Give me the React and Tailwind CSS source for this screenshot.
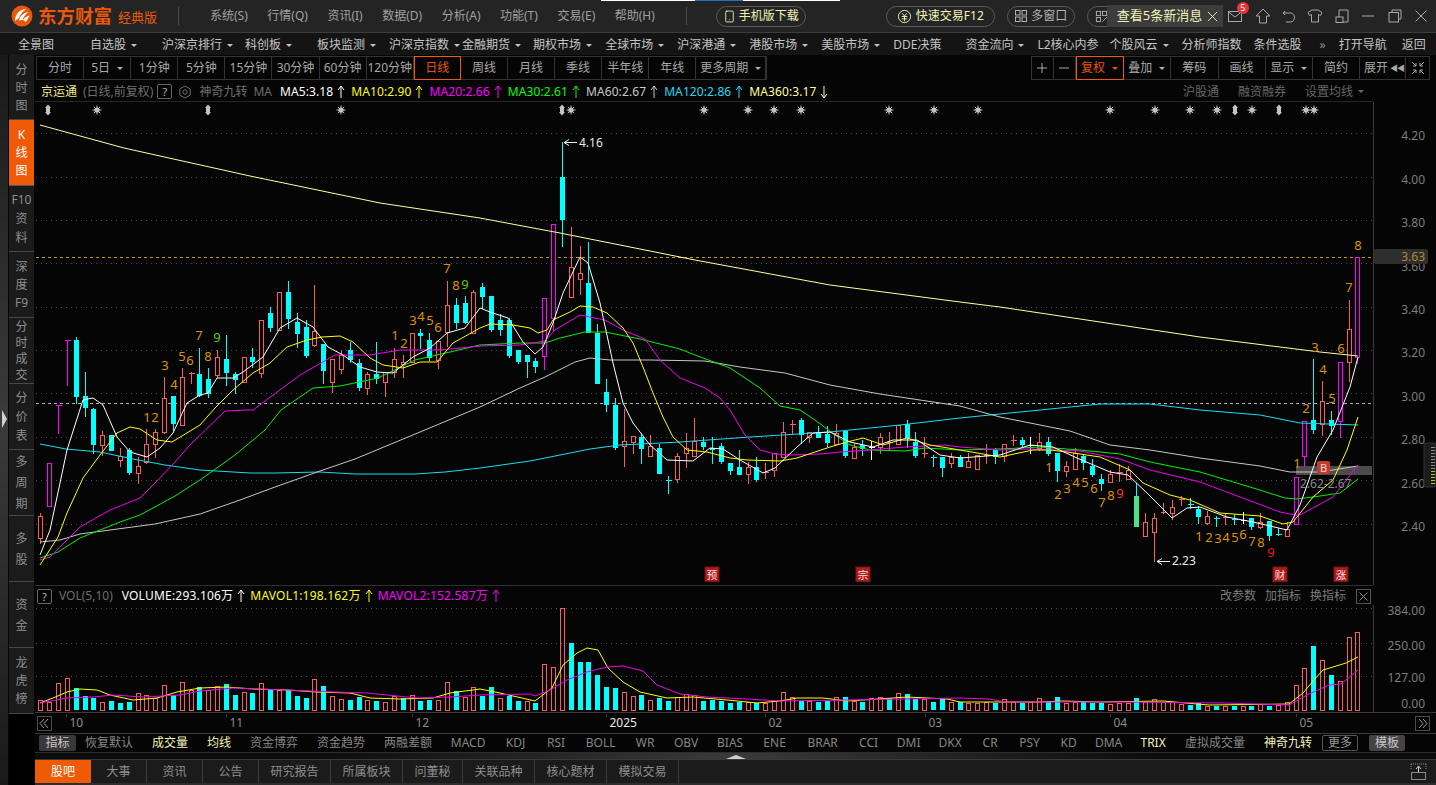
import React from "react";
import { Smartphone } from "lucide-react";

const BG = "#050505";
const RED = "#f95d5d";
const CY = "#00ffff";
const MG = "#ff00ff";

const CANDLES = [
["r",516,538,513,543],["m",463,506],["m",405,405,405,433],["m",340,340,340,385],["c",340,396,337,403],["c",396,407,372,416],["c",409,444,408,453],["r",435,445,431,455],["c",435,450],["r",456,460,448,466],
["c",450,472,448,474],["r",466,473,457,483],["r",444,462,429,463],["r",432,444,429,457],["r",398,432,377,433],["c",396,423,396,430],["r",377,425,368,425],["r",373,373,372,383],["c",374,395,348,396],["c",379,393,368,397],
["r",357,375,350,377],["c",359,372,335,385],["c",374,379,372,393],["r",357,382],["c",357,361,348,367],["r",320,373,320,377],["c",313,327,307,331],["r",292,330],["c",292,318,281,328],["c",322,333,313,347],
["c",327,355,320,357],["r",331,345,285,346],["c",344,370,344,383],["r",359,382,359,392],["r",355,369,350,373],["c",350,359,342,362],["c",363,387,359,390],["r",374,388,372,394],["c",374,378,342,383],["r",372,382,372,396],
["r",359,372,348,377],["r",362,364,355,377],["r",333,362],["c",333,335,329,348],["c",340,357,333,360],["r",341,360,341,368],["r",305,332,281,346],["c",305,322,298,328],["c",303,322,296,323],["r",292,333,290,333],
["c",287,296,283,308],["c",296,329,296,331],["c",320,329,314,335],["c",320,355,318,357],["c",350,361,350,363],["c",355,361,355,377],["c",361,366,358,372],["m",298,356,298,369],["m",224,318,224,330],["c",177,219,142,246],
["r",267,297,227,297],["r",273,279,246,294],["c",283,332,242,332],["c",333,383,324,383],["c",392,404,379,411],["c",405,447,398,449],["r",441,446,409,466],["r",436,442,436,453],["c",437,448,433,463],["r",446,456,435,456],
["c",448,473,444,473],["c",480,480,476,493],["r",456,479,453,482],["r",448,453,433,467],["r",441,456,418,456],["c",442,446,437,449],["c",448,449,437,463],["c",446,461,443,463],["c",463,470,463,474],["c",467,474,450,474],
["r",467,474,462,483],["c",467,479,457,481],["r",472,472,463,478],["r",453,470,453,476],["r",432,457,422,457],["r",424,424,420,434],["c",420,434,418,443],["r",432,437,432,442],["c",433,437,426,437],["c",434,442,426,446],
["r",433,444,424,444],["c",431,455,431,457],["r",447,458,443,458],["c",445,448,440,455],["w",447,447,441,459],["r",437,447,433,453],["r",442,442,432,450],["r",425,444],["c",424,437,420,447],["c",442,455,432,457],
["r",453,453,437,457],["c",457,457,455,466],["c",457,467,457,476],["r",457,463,453,467],["c",457,466,455,466],["r",461,467,453,467],["r",455,469,455,469],["r",455,455,444,463],["c",450,456,448,463],["r",444,456,444,461],
["r",440,440,435,445],["c",440,444,437,447],["w",445,445,437,453],["r",442,448,433,450],["c",442,453,437,455],["c",453,470,453,481],["r",466,471,461,476],["r",453,469,448,469],["c",456,462,454,469],["c",466,474,459,476],
["c",479,483,474,490],["r",474,482,470,482],["r",472,472,464,481],["r",470,479,466,479],["g",496,526,483,526],["r",522,536,513,536],["r",518,532,513,561],["r",512,512,503,513],["r",507,513,500,519],["r",499,499,496,505],
["c",504,504,498,508],["c",509,516,506,523],["r",516,523,511,524],["c",518,518,516,526],["r",517,517,514,524],["c",519,519,514,524],["w",520,520,512,523],["c",518,526,518,529],["r",522,527,513,528],["c",521,535,521,540],
["c",534,534,528,535],["r",529,536,522,536],["m",477,524],["m",421,456,421,466],["c",420,429,359,433],["r",401,424,381,435],["c",420,425,411,434],["m",362,421,362,437],["r",329,362,300,381],["m",257,357,257,363],
];

const VOLS = "r700 r702 r683 r678 c688 c696 c698 r702 c701 c703 c702 r693 r695 r698 r685 c695 r682 r690 c687 r690 r686 c684 c695 r692 c693 r683 c690 r690 c690 c696 c698 r679 c686 r696 r699 c700 c697 r700 c701 r702 r696 c698 r695 c701 c700 r700 r682 c691 r697 r687 c696 c687 r698 c696 c701 r701 c703 r664 r667 r608 c643 c662 c662 c675 c687 c688 r692 r696 c695 r700 c698 c701 r697 r694 r695 c701 c700 c701 c703 c702 r702 c703 r703 r701 r692 r697 c701 r701 c702 c701 r697 c697 r701 c702 r698 r697 c698 r693 c694 c699 r699 c702 c699 r702 c702 r703 r703 r702 c703 r699 r702 c703 r702 r698 c702 c697 r703 r702 c702 c703 c703 r704 r703 r703 c698 r702 r699 r702 r702 r704 c705 c703 r706 c706 r706 c706 r706 c706 r704 c706 r705 r702 r685 r668 c646 r660 c675 r681 r637 r632".split(" ");

const MA360 = "40,125 124,148 250,176 380,203 480,218 560,233 695,260 830,285 960,302 1000,307 1100,322 1200,337 1320,352 1358,356";
const MA120 = "40,444 66,449 100,452 133,459 165,465 200,470 250,473 275,473 320,472 355,474 415,474 445,472 480,468 530,461 590,449 620,445 680,442 750,437 830,432 900,425 960,418 1000,414 1040,410 1100,404 1150,404 1200,410 1260,415 1300,423 1358,425";
const MA60 = "40,542 60,540 80,534 110,530 155,524 200,514 240,500 275,487 320,471 355,459 420,432 480,407 520,388 545,377 575,362 590,358 610,360 650,360 705,361 740,367 785,373 830,385 880,394 920,400 960,406 1000,417 1070,431 1110,445 1150,450 1200,458 1260,466 1290,472 1320,472 1358,466";
const MA30 = "40,558 58,552 80,538 100,530 120,522 140,515 175,496 200,480 235,455 265,430 281,410 313,388 340,386 378,378 415,360 450,352 480,345 520,343 545,343 560,338 585,332 605,332 640,339 680,349 695,355 730,368 760,388 780,406 800,410 815,420 835,435 850,445 870,450 905,451 925,448 960,450 1000,449 1040,447 1080,450 1120,454 1150,462 1200,472 1250,487 1285,498 1297,499 1320,496 1340,493 1358,479";
const MA20 = "40,560 50,557 80,527 110,510 140,498 155,483 175,462 190,445 225,411 245,410 253,410 300,375 335,355 370,355 400,350 440,350 480,346 520,345 545,341 555,330 580,315 605,320 625,331 645,339 660,360 680,378 705,388 720,398 730,410 745,435 760,450 775,454 790,455 820,454 840,452 870,450 905,447 945,445 960,447 1000,450 1030,449 1080,451 1120,459 1150,470 1200,482 1240,497 1280,512 1295,515 1300,515 1333,497 1358,465";
const MA10 = "40,565 58,537 67,513 83,478 100,455 117,433 130,427 140,429 157,440 172,442 200,425 215,408 233,390 253,373 270,363 287,347 307,340 322,337 340,336 353,342 370,358 383,365 403,368 420,362 437,362 453,343 480,328 490,324 513,325 530,328 538,333 547,330 553,320 570,312 580,306 593,307 607,313 623,328 633,343 643,367 653,393 663,417 673,437 687,450 707,452 730,458 747,460 780,461 797,458 830,447 847,442 863,438 883,445 907,438 930,445 960,450 1000,457 1033,450 1050,450 1067,452 1100,457 1130,470 1143,483 1170,495 1190,500 1220,513 1260,516 1283,524 1293,522 1313,497 1333,480 1347,450 1358,417";
const MA5 = "40,555 50,530 67,450 83,400 93,398 103,405 117,437 130,452 147,457 160,448 173,433 187,403 200,395 208,393 217,378 233,378 243,372 263,357 280,328 297,318 313,327 328,347 343,355 360,367 377,372 393,373 413,357 430,348 447,333 465,328 480,308 490,312 508,318 523,342 535,354 543,347 553,323 563,293 580,257 588,263 600,303 613,363 623,403 633,423 650,445 667,460 693,461 710,448 723,449 740,460 763,473 775,468 797,447 813,433 830,432 850,442 873,447 893,440 917,440 940,455 960,458 1000,455 1030,445 1053,447 1077,458 1110,472 1128,475 1147,493 1172,518 1187,508 1200,507 1227,517 1253,522 1287,530 1300,505 1317,457 1333,430 1350,387 1358,357";
const MAV1 = "40,703 53,698 67,692 80,689 97,690 110,695 133,700 157,698 177,692 200,688 227,687 253,689 287,690 317,692 350,693 370,698 400,699 433,698 450,693 480,689 500,693 513,696 535,701 552,688 563,665 577,653 587,648 598,650 608,668 623,682 640,692 667,698 693,697 727,700 757,703 780,701 797,698 823,698 847,701 893,698 907,697 947,699 960,702 999,702 1039,702 1063,701 1099,702 1163,701 1209,705 1289,704 1303,693 1314,680 1323,670 1333,667 1346,663 1358,657";
const MAV2 = "40,703 67,698 93,697 113,695 143,697 180,695 200,691 233,688 287,690 333,692 367,693 417,698 450,697 480,695 530,694 535,696 550,690 567,680 587,672 607,667 623,666 643,671 657,685 680,694 707,697 747,699 780,701 847,700 960,698 989,699 1006,702 1123,702 1223,703 1289,705 1309,694 1329,685 1341,684 1358,670";

const NUMS = [
["1",147,417],["2",155,417],["3",165,365],["4",174,384],["5",182,356],["6",190,360],["7",199,335],["8",208,356],["9",217,337,"#5cd000"],
["1",395,335],["2",404,343],["3",413,320],["4",421,316],["5",430,320],["6",438,327],["7",447,268],["8",456,285],["9",465,284,"#5cd000"],
["1",1049,467],["2",1058,494],["3",1067,488],["4",1076,482],["5",1085,482],["6",1094,488],["7",1102,502],["8",1111,495],["9",1120,493,"#f04010"],
["1",1199,536],["2",1209,537],["3",1218,538],["4",1226,537],["5",1235,537],["6",1243,534],["7",1252,541],["8",1261,542],["9",1271,552,"#f01010"],
["1",1297,463],["2",1306,408],["3",1315,347],["4",1323,369],["5",1332,398],["6",1341,348],["7",1349,287],["8",1358,245],
];
const STARS = [97,341,571,704,748,774,801,889,934,978,1110,1155,1190,1217,1252,1306,1314];
const MARKS = [48,208,562,1235,1279];
const GRID = [133.5,177,220.5,263.5,307,350.5,393.5,437,480.5,524];
const PRICE = [["4.20",135],["4.00",179],["3.80",222],["3.60",266],["3.40",309],["3.20",352],["3.00",396],["2.80",439],["2.60",483],["2.40",526]];

const cx = (i) => Math.round(40.3 + 8.84 * i) + 0.5;

function Candle({ d, i }) {
  const [k, t, b, hi, lo] = d;
  const x = cx(i);
  const col = k === "r" ? RED : k === "c" ? CY : k === "m" ? MG : k === "w" ? "#ffffff" : "#4fe08a";
  const h = hi || t;
  const l = lo || b;
  const wick = k === "g" ? CY : col;
  return (
    <g shapeRendering="crispEdges">
      <line x1={x} x2={x} y1={h} y2={l + 1} stroke={wick} />
      {t === b ? (
        <line x1={x - 3} x2={x + 3} y1={t + 0.5} y2={t + 0.5} stroke={col} />
      ) : k === "r" || k === "m" ? (
        <rect x={x - 2} y={t + 0.5} width={4} height={b - t} fill={BG} stroke={col} />
      ) : (
        <rect x={x - 2.5} y={t} width={5} height={b - t + 1} fill={col} />
      )}
    </g>
  );
}

function Star({ x }) {
  return (
    <g stroke="#bdbdbd" strokeWidth="1">
      <circle cx={x} cy={110} r={2.6} fill="#cfcfcf" stroke="none" />
      <line x1={x - 4.5} x2={x + 4.5} y1={110} y2={110} />
      <line x1={x} x2={x} y1={105.5} y2={114.5} />
      <line x1={x - 3.2} x2={x + 3.2} y1={106.8} y2={113.2} />
      <line x1={x - 3.2} x2={x + 3.2} y1={113.2} y2={106.8} />
    </g>
  );
}

function Mark({ x }) {
  return <path d={`M${x} 104.5 l3 3.5 h-1 v4 h1 l-3 3.5 l-3 -3.5 h1 v-4 h-1 z`} fill="#c4c4c4" />;
}

function PriceChart() {
  return (
    <svg viewBox="35 102 1401 483" width="1401" height="483" className="block">
      <g stroke="#4a4a4a" strokeDasharray="1 4" shapeRendering="crispEdges">
        {GRID.map((y) => (
          <line key={y} x1="36" x2="1373" y1={y} y2={y} />
        ))}
      </g>
      <line x1="36" x2="1373" y1="257.5" y2="257.5" stroke="#c49620" strokeDasharray="3 3" shapeRendering="crispEdges" />
      <line x1="36" x2="1373" y1="403.5" y2="403.5" stroke="#b0b0b0" strokeDasharray="3 3" shapeRendering="crispEdges" />
      {STARS.map((x) => (
        <Star key={x} x={x} />
      ))}
      {MARKS.map((x) => (
        <Mark key={x} x={x} />
      ))}
      <rect x="1296" y="466" width="76" height="9" fill="#4c4c4c" />
      {CANDLES.map((d, i) => (
        <Candle key={i} d={d} i={i} />
      ))}
      <g fill="none" strokeWidth="1">
        <polyline points={MA360} stroke="#ffff9e" />
        <polyline points={MA120} stroke="#19dcf0" />
        <polyline points={MA60} stroke="#c6c6c6" />
        <polyline points={MA30} stroke="#00f000" />
        <polyline points={MA20} stroke="#f000f0" />
        <polyline points={MA10} stroke="#ffff00" />
        <polyline points={MA5} stroke="#ffffff" />
      </g>
      <g fontSize="13" textAnchor="middle" fill="#dc9200">
        {NUMS.map(([t, x, y, c], i) => (
          <text key={i} x={x} y={y + 5} fill={c || "#dc9200"}>
            {t}
          </text>
        ))}
      </g>
      <g stroke="#f0f0f0" fill="none">
        <path d="M564 142.5 H577 M564 142.5 l5 -3 M564 142.5 l5 3" />
        <path d="M1157 561.5 H1170 M1157 561.5 l5 -3 M1157 561.5 l5 3" />
      </g>
      <text x="579" y="146.5" fontSize="12" fill="#e8e8e8">4.16</text>
      <text x="1172" y="565" fontSize="12" fill="#e8e8e8">2.23</text>
      <text x="1300" y="487.5" fontSize="12" fill="#8a8a8a">2.62-2.67</text>
      <rect x="1317" y="461" width="13" height="13" rx="2" fill="#c8382c" />
      <text x="1323.5" y="471.5" fontSize="11" textAnchor="middle" fill="#f0d8d0">B</text>
      {[["预", 712], ["宗", 863], ["财", 1280], ["涨", 1341]].map(([t, x]) => (
        <g key={t}>
          <rect x={x - 7} y="567" width="14" height="14.5" fill="#b01c1c" stroke="#7a1414" />
          <text x={x} y="578.5" fontSize="10.5" textAnchor="middle" fill="#f2e0e0">{t}</text>
        </g>
      ))}
      <line x1="1373.5" x2="1373.5" y1="102" y2="585" stroke="#3a3a3a" shapeRendering="crispEdges" />
      <g fontSize="12" fill="#7c7c7c" textAnchor="end">
        {PRICE.map(([t, y]) => (
          <text key={t} x="1425" y={y + 4.5}>{t}</text>
        ))}
      </g>
      <rect x="1374" y="249" width="54" height="15" rx="2" fill="#2e2e2e" />
      <text x="1425" y="261" fontSize="12" fill="#b08a2c" textAnchor="end">3.63</text>
      <rect x="1424" y="443" width="12" height="44" rx="2" fill="#1c1c1c" stroke="#333" />
      <g stroke="#8a8a8a" shapeRendering="crispEdges">
        {[447, 450, 453, 456, 459, 462, 465, 468].map((y) => (
          <line key={y} x1="1431" x2="1435" y1={y + 0.5} y2={y + 0.5} />
        ))}
      </g>
      <g stroke="#b8c020" shapeRendering="crispEdges">
        {[471, 474, 477, 480, 483].map((y) => (
          <line key={y} x1="1431" x2="1435" y1={y + 0.5} y2={y + 0.5} />
        ))}
      </g>
    </svg>
  );
}

function VolChart() {
  return (
    <svg viewBox="35 605 1401 107" width="1401" height="107" className="block overflow-visible">
      <g stroke="#4a4a4a" strokeDasharray="1 4" shapeRendering="crispEdges">
        {[608.5, 643.5, 676.5].map((y) => (
          <line key={y} x1="36" x2="1373" y1={y} y2={y} />
        ))}
      </g>
      <g shapeRendering="crispEdges">
        {VOLS.map((v, i) => {
          const top = +v.slice(1);
          const x = cx(i);
          return v[0] === "c" ? (
            <rect key={i} x={x - 2.5} y={top} width={5} height={710 - top} fill={CY} />
          ) : (
            <rect key={i} x={x - 2} y={top + 0.5} width={4} height={709.5 - top} fill="none" stroke={RED} />
          );
        })}
      </g>
      <polyline points={MAV1} fill="none" stroke="#ffff00" />
      <polyline points={MAV2} fill="none" stroke="#f000f0" />
      <line x1="1373.5" x2="1373.5" y1="605" y2="712" stroke="#3a3a3a" shapeRendering="crispEdges" />
      <g fontSize="12" fill="#7c7c7c" textAnchor="end">
        {[["384.00", 615], ["250.00", 650], ["127.00", 682], ["0.00", 708]].map(([t, y]) => (
          <text key={t} x="1425" y={y}>{t}</text>
        ))}
      </g>
    </svg>
  );
}

const TopIcon = ({ children, cls }) => (
  <svg viewBox="0 0 16 16" width="16" height="16" fill="none" stroke="#a8a8a8" className={cls}>
    {children}
  </svg>
);

function Caret({ c = "#b0b0b0", cls = "ml-[5px]" }) {
  return <span className={cls + " inline-block w-0 h-0 border-x-[3px] border-x-transparent border-t-[3px]"} style={{ borderTopColor: c }} />;
}

function Logo() {
  return (
    <svg viewBox="0 0 22 22" width="22" height="22">
      <circle cx="11" cy="11" r="10.5" fill="#e8590c" />
      <path d="M4 16 C4 9 9 4 15 4 C11 7 9 10 8 13 Z" fill="#fff" />
      <path d="M8 15.5 C9 11 12 8 17.5 7 C14 10 12.5 12 11.5 15 Z" fill="#fff" />
      <path d="M12 15 C13 13 15.5 11 19 10.5 C17 13 16 15 15 17 Z" fill="#fff" />
    </svg>
  );
}

const MENUS = ["系统(S)", "行情(Q)", "资讯(I)", "数据(D)", "分析(A)", "功能(T)", "交易(E)", "帮助(H)"];

function TitleBar() {
  return (
    <div className="h-[33px] bg-[#242424] border-b border-[#3c3c3c] relative flex items-center">
      <div className="absolute top-0 left-[601px] flex h-px">
        <div className="w-[94px] bg-white" />
        <div className="w-[48px] bg-[#1e6fd0]" />
        <div className="w-[97px] bg-white" />
      </div>
      <div className="ml-[11px] flex items-center">
        <Logo />
      </div>
      <span className="ml-[5px] w-[76px] text-[18.5px] font-bold text-[#e8590c] leading-none whitespace-nowrap">东方财富</span>
      <span className="ml-[4px] mt-[3px] w-[40px] text-[13px] text-[#e8590c] whitespace-nowrap">经典版</span>
      <div className="ml-[20px] w-px h-[18px] bg-[#4a4a4a]" />
      <div className="ml-[31px] flex gap-[19.5px] text-[12px] text-[#a0a0a0]">
        {MENUS.map((m) => (
          <span key={m} className="whitespace-nowrap">{m}</span>
        ))}
      </div>
      <div className="ml-[31px] w-px h-[18px] bg-[#4a4a4a]" />
      <div className="ml-[29px] w-[90px] h-[21px] rounded-full border border-[#5a5a5a] flex items-center justify-center text-[12px] text-[#f2f2b8] whitespace-nowrap">
        <Smartphone size={13} strokeWidth={1.6} className="mr-[3px]" />
        手机版下载
      </div>
      <div className="ml-[80px] w-[109px] h-[21px] rounded-full border border-[#5a5a5a] flex items-center justify-center text-[12px] text-[#f2f2b8] whitespace-nowrap">
        <svg viewBox="0 0 16 16" width="15" height="15" className="mr-[4px]" fill="none" stroke="#f2f2b8">
          <circle cx="8" cy="8" r="6.5" />
          <path d="M5.5 4.5 L8 7.5 L10.5 4.5 M5 8 H11 M5 10.5 H11 M8 7.5 V13" />
        </svg>
        快速交易F12
      </div>
      <div className="ml-[12px] w-[68px] h-[21px] rounded-full border border-[#5a5a5a] flex items-center justify-center text-[12px] text-[#b0b0b0] whitespace-nowrap">
        <svg viewBox="0 0 14 14" width="14" height="14" className="mr-[3px]" fill="none" stroke="#b0b0b0">
          <rect x="1.5" y="1.5" width="4.5" height="4.5" />
          <rect x="8" y="1.5" width="4.5" height="4.5" />
          <rect x="1.5" y="8" width="4.5" height="4.5" />
          <rect x="8" y="8" width="4.5" height="4.5" />
        </svg>
        多窗口
      </div>
      <div className="ml-[12px] w-[40px] h-[21px] rounded-l-full border border-[#5a5a5a] flex items-center pl-[7px]">
        <svg viewBox="0 0 14 14" width="13" height="13" fill="none" stroke="#b0b0b0">
          <rect x="1.5" y="1.5" width="4.5" height="4.5" />
          <rect x="1.5" y="8" width="4.5" height="4.5" />
          <rect x="8" y="1.5" width="4.5" height="4.5" />
          <path d="M8 12.5 L13 7.5" />
        </svg>
      </div>
      <div className="relative -ml-[20px] w-[116px] h-[22px] bg-[#3c3c3c] flex items-center pl-[10px] text-[13px] text-[#f2f2b8] whitespace-nowrap">
        查看5条新消息
        <svg viewBox="0 0 12 12" width="11" height="11" className="ml-[5px]" stroke="#f2f2b8" fill="none">
          <path d="M1 1 L11 11 M11 1 L1 11" />
        </svg>
      </div>
      <div className="relative ml-[4px]">
        <TopIcon>
          <rect x="1.5" y="3.5" width="13" height="10" />
          <path d="M1.5 4 L8 9 L14.5 4" />
        </TopIcon>
        <span className="absolute -top-[6px] -right-[6px] w-[12px] h-[12px] rounded-full bg-[#e8333a] text-white text-[9px] leading-[12px] text-center">5</span>
      </div>
      <TopIcon cls="ml-[12px]">
        <path d="M8 1 L15 8 H11.5 V15 H4.5 V8 H1 Z" />
      </TopIcon>
      <TopIcon cls="ml-[10px]">
        <path d="M4 3 L2 5 L4 7 M2 5 H9.5 C12 5 13.5 7 13.5 9.5 C13.5 12 12 14 9.5 14 H5" />
      </TopIcon>
      <TopIcon cls="ml-[10px]">
        <path d="M5 2 H11 L15 4.5 L13.5 7.5 L11.5 6.5 V14 H4.5 V6.5 L2.5 7.5 L1 4.5 Z" />
      </TopIcon>
      <TopIcon cls="ml-[11px]">
        <path d="M5 9 V2 H14 V14 H9" />
        <rect x="2" y="9" width="7" height="5.5" />
      </TopIcon>
      <TopIcon cls="ml-[10px]">
        <path d="M2 8 H14" />
      </TopIcon>
      <TopIcon cls="ml-[11px]">
        <rect x="2" y="4.5" width="9.5" height="9.5" />
        <path d="M5 4 V2 H14 V11 H12" />
      </TopIcon>
      <TopIcon cls="ml-[10px]">
        <path d="M2.5 2.5 L13.5 13.5 M13.5 2.5 L2.5 13.5" />
      </TopIcon>
    </div>
  );
}

const NAV = [
  ["全景图", 18, 0], ["自选股", 36, 1], ["沪深京排行", 25, 1], ["科创板", 12, 1], ["板块监测", 25, 1], ["沪深京指数", 13, 1], ["金融期货", 2, 1],
  ["期权市场", 12, 1], ["全球市场", 13, 1], ["沪深港通", 13, 1], ["港股市场", 13, 1], ["美股市场", 13, 1], ["DDE决策", 13, 0], ["资金流向", 24, 1],
  ["L2核心内参", 13, 0], ["个股风云", 11, 1], ["分析师指数", 13, 0], ["条件选股", 12, 0],
];

function NavBar() {
  return (
    <div className="h-[22px] pt-[2px] bg-[#141414] flex items-center text-[12px] text-[#c4c4c4] whitespace-nowrap">
      {NAV.map(([t, ml, c]) => (
        <span key={t} className="flex items-center" style={{ marginLeft: ml }}>
          {t}
          {c ? <Caret c="#c4c4c4" /> : null}
        </span>
      ))}
      <span className="ml-[18px] text-[#8a8a8a]">»</span>
      <span className="ml-[13px]">打开导航</span>
      <span className="ml-[15px]">返回</span>
    </div>
  );
}

const SIDE = [
  [["分", "时", "图"], 65, 18, 0, 2],
  [["K", "线", "图"], 66, 18, 1],
  [["F10", "资", "料"], 66, 19],
  [["深", "度", "F9"], 66, 18],
  [["分", "时", "成", "交"], 66, 16],
  [["分", "价", "表"], 66, 19],
  [["多", "周", "期"], 66, 21],
  [["多", "股"], 66, 21],
  [["资", "金"], 66, 21],
  [["龙", "虎", "榜"], 66, 18],
];

function SideBar() {
  return (
    <div className="w-[35px] shrink-0 flex relative">
      <div className="w-[8px] bg-[linear-gradient(180deg,#1a1a1a_0%,#3a3a3a_50%,#1a1a1a_100%)] relative">
        <svg viewBox="0 0 6 18" width="6" height="18" className="absolute left-[2px] top-[355px]">
          <path d="M0 0 L5 9 L0 18 Z" fill="#d0d0d0" />
        </svg>
      </div>
      <div className="ml-px w-[25px] bg-black">
        {SIDE.map(([lines, h, lh, active, pt], i) => (
          <div
            key={i}
            className={
              active
                ? "flex flex-col items-center justify-center bg-[#ee5a06] text-white text-[12px] border-b border-[#555]"
                : "flex flex-col items-center justify-center bg-[#1b1b1b] text-[#8e8e8e] text-[12px] border-b border-[#474747]"
            }
            style={{ height: h, lineHeight: lh + "px", paddingTop: pt || 0 }}
          >
            {lines.map((l, j) => (
              <span key={j}>{l}</span>
            ))}
          </div>
        ))}
      </div>
    </div>
  );
}

const Cell = ({ w, active, children }) => (
  <div
    className={
      active
        ? "flex items-center justify-center h-[24px] -my-px border border-[#f05a0a] text-[#e8560a] whitespace-nowrap"
        : "flex items-center justify-center h-[22px] border-r border-[#333] text-[#a8a8a8] whitespace-nowrap"
    }
    style={{ width: w }}
  >
    {children}
  </div>
);

const LEFT_CELLS = ["分时", "5日", "1分钟", "5分钟", "15分钟", "30分钟", "60分钟", "120分钟", "日线", "周线", "月线", "季线", "半年线", "年线"];
const WIDE = "ml-[7px]";

function ToolBar() {
  return (
    <div className="h-[25px] flex items-end justify-between pl-[1px] pr-[6px] text-[12px] bg-[#050505]">
      <div className="flex items-center border border-[#333] h-[24px]">
        {LEFT_CELLS.map((c, i) => (
          <Cell key={c} w={47.1} active={c === "日线"}>
            {c}
            {c === "5日" ? <Caret cls={WIDE} /> : null}
          </Cell>
        ))}
        <Cell w={70}>
          更多周期
          <Caret cls={WIDE} />
        </Cell>
      </div>
      <div className="flex items-center border border-[#333] h-[24px]">
        <Cell w={22}>
          <svg viewBox="0 0 12 12" width="12" height="12" stroke="#a8a8a8"><path d="M1 6 H11 M6 1 V11" /></svg>
        </Cell>
        <Cell w={22}>
          <svg viewBox="0 0 12 12" width="12" height="12" stroke="#a8a8a8"><path d="M1 6 H11" /></svg>
        </Cell>
        <Cell w={48} active>
          复权
          <Caret c="#e8560a" cls={WIDE} />
        </Cell>
        <Cell w={47.5}>叠加<Caret cls={WIDE} /></Cell>
        <Cell w={47.5}>筹码</Cell>
        <Cell w={47}>画线</Cell>
        <Cell w={47.5}>显示<Caret cls={WIDE} /></Cell>
        <Cell w={47}>简约</Cell>
        <Cell w={46}>
          <span className="ml-[3px]">展开</span>
          <span className="ml-[2px] text-[8px] tracking-[-1px] text-[#a8a8a8]">◀◀</span>
        </Cell>
        <div className="w-[23px] flex items-center justify-center">
          <svg viewBox="0 0 14 14" width="14" height="14" stroke="#a8a8a8" fill="none">
            <path d="M1 1 L5 5 M5 2 V5 H2 M13 1 L9 5 M9 2 V5 H12 M1 13 L5 9 M5 12 V9 H2 M13 13 L9 9 M9 12 V9 H12" />
          </svg>
        </div>
      </div>
    </div>
  );
}

const Arrow = ({ c, down, cls = "ml-[4px]" }) => (
  <svg viewBox="0 0 8 14" width="8" height="14" fill="none" stroke={c} className={cls}>
    {down ? <path d="M4 1 V13 M1 9 L4 13 L7 9" /> : <path d="M4 13 V1 M1 5 L4 1 L7 5" />}
  </svg>
);

const Help = () => (
  <span className="w-[15px] h-[15px] border border-[#666] rounded-[2px] text-[#b0b0b0] text-[11px] leading-[13px] text-center">?</span>
);

const MAS = [
  ["MA5:3.18", "#ffffff"],
  ["MA10:2.90", "#ffff00"],
  ["MA20:2.66", "#ff00ff"],
  ["MA30:2.61", "#00ff00"],
  ["MA60:2.67", "#c8c8c8"],
  ["MA120:2.86", "#19dcf0"],
  ["MA360:3.17", "#ffff9e"],
];

function LegendRow() {
  return (
    <div className="h-[22px] flex items-center text-[12px] whitespace-nowrap border-b border-[#262626] w-[1338px] pt-[2px]">
      <span className="ml-[6px] text-[#f0e68c]">京运通</span>
      <span className="ml-[6px] text-[#6e6e6e]">(日线,前复权)</span>
      <span className="ml-[4px] flex"><Help /></span>
      <svg viewBox="0 0 14 14" width="14" height="14" className="ml-[6px]" fill="none" stroke="#6e6e6e">
        <path d="M7 1 L12.2 4 V10 L7 13 L1.8 10 V4 Z" />
        <circle cx="7" cy="7" r="2.2" />
      </svg>
      <span className="ml-[7px] text-[#6e6e6e]">神奇九转</span>
      <span className="ml-[6px] text-[#6e6e6e]">MA</span>
      <div className="ml-[8px] flex items-center tracking-[0.1px]">
        {MAS.map(([t, c], i) => (
          <span key={t} className="flex items-center" style={{ color: c, marginRight: 6 }}>
            {t}
            <Arrow c={c} down={i === 6} />
          </span>
        ))}
      </div>
      <div className="ml-auto flex items-center gap-[19px] pr-[9px] text-[#666]">
        <span>沪股通</span>
        <span>融资融券</span>
        <span className="flex items-center">设置均线<Caret c="#666" /></span>
      </div>
    </div>
  );
}

function VolLegend() {
  return (
    <div className="h-[20px] pt-[1px] flex items-center text-[12px] whitespace-nowrap w-[1338px] border-t border-[#2e2e2e]">
      <span className="ml-[2px] flex"><Help /></span>
      <span className="ml-[7px] text-[#6e6e6e]">VOL(5,10)</span>
      <div className="ml-[9px] flex items-center tracking-[0.2px]">
        <span className="flex items-center text-[#ffffff]">VOLUME:293.106万<Arrow c="#ffffff" /></span>
        <span className="ml-[5px] flex items-center text-[#ffff00]">MAVOL1:198.162万<Arrow c="#ffff00" /></span>
        <span className="ml-[5px] flex items-center text-[#ff00ff]">MAVOL2:152.587万<Arrow c="#ff00ff" /></span>
      </div>
      <div className="ml-auto flex items-center gap-[9px] pr-[2px] text-[#7a7a7a]">
        <span>改参数</span>
        <span>加指标</span>
        <span>换指标</span>
        <span className="ml-[1px] w-[15px] h-[15px] border border-[#555] flex items-center justify-center">
          <svg viewBox="0 0 9 9" width="9" height="9" stroke="#8a8a8a"><path d="M0.5 0.5 L8.5 8.5 M8.5 0.5 L0.5 8.5" /></svg>
        </span>
      </div>
    </div>
  );
}

const Box = ({ children }) => (
  <span className="w-[15px] h-[15px] border border-[#4a4a4a] flex items-center justify-center">
    <svg viewBox="0 0 11 11" width="11" height="11" fill="none" stroke="#9a9a9a">{children}</svg>
  </span>
);

function DateAxis() {
  const labels = [
    ["10", 66, 0], ["11", 226, 0], ["12", 412, 0], ["2025", 606, 1], ["02", 765, 0], ["03", 925, 0], ["04", 1110, 0], ["05", 1296, 0],
  ];
  return (
    <div className="h-[21px] border-t border-[#3a3a3a] relative flex items-center justify-between pl-[2px] pr-[6px] text-[12px]">
      <Box><path d="M5 1 L1 5.5 L5 10 M9 1 L5 5.5 L9 10" /></Box>
      {labels.map(([t, x, w]) => (
        <span key={t} className={w ? "absolute top-[1px] text-[#e8e8e8]" : "absolute top-[1px] text-[#8a8a8a]"} style={{ left: x - 35 + 3.5 }}>
          {t}
          <span className="absolute top-0 -left-[3.5px] w-px h-[3px] bg-[#3a3a3a]" />
        </span>
      ))}
      <Box><path d="M2 1 L6 5.5 L2 10 M6 1 L10 5.5 L6 10" /></Box>
    </div>
  );
}

const IND = [
  ["恢复默认"], ["成交量", 1], ["均线", 1], ["资金博弈"], ["资金趋势"], ["两融差额"], ["MACD", 0, 34], ["KDJ", 0, 23], ["RSI", 0, 20], ["BOLL", 0, 31], ["WR", 0, 20], ["OBV", 0, 24], ["BIAS", 0, 26], ["ENE", 0, 25], ["BRAR", 0, 33], ["CCI", 0, 21], ["DMI", 0, 21], ["DKX", 0, 24], ["CR", 0, 18], ["PSY", 0, 23], ["KD", 0, 17], ["DMA", 0, 25], ["TRIX", 1, 26], ["虚拟成交量"], ["神奇九转", 1],
];

function IndicatorRow() {
  return (
    <div className="h-[19px] flex items-center gap-[19px] pl-[4px] border-t border-[#3a3a3a] text-[12px] text-[#858585] whitespace-nowrap">
      <span className="w-[37px] h-[16px] -mr-[10px] rounded-[2px] bg-[#383838] text-[#c8c8c8] flex items-center justify-center">指标</span>
      {IND.map(([t, h, w]) => (
        <span key={t} className={h ? "text-[#f2f2b8] flex justify-center" : "flex justify-center"} style={w ? { width: w } : undefined}>{t}</span>
      ))}
      <span className="-ml-[9px] w-[36px] h-[16px] border border-[#555] rounded-[2px] text-[#9a9a9a] flex items-center justify-center">更多</span>
      <span className="-ml-[8px] w-[36px] h-[16px] rounded-[2px] bg-[#444] text-[#c8c8c8] flex items-center justify-center">模板</span>
    </div>
  );
}

const TABS = [["股吧", 56, 1], ["大事", 56], ["资讯", 56], ["公告", 56], ["研究报告", 72], ["所属板块", 72], ["问董秘", 60], ["关联品种", 72], ["核心题材", 72], ["模拟交易", 72]];

function BottomTabs() {
  return (
    <div className="h-[26px] flex items-stretch bg-[#1b1b1b] border-t border-[#3a3a3a] border-b-2 border-b-[#2d2d2d] text-[12px] text-[#8e8e8e]">
      {TABS.map(([t, w, a]) => (
        <div
          key={t}
          className={a ? "flex items-center justify-center bg-[#ee5a06] text-white" : "flex items-center justify-center border-r border-[#3c3c3c]"}
          style={{ width: w }}
        >
          {t}
        </div>
      ))}
      <div className="ml-auto mr-[9px] flex items-center">
        <svg viewBox="0 0 17 17" width="17" height="17" fill="none" stroke="#8a8a8a">
          <path d="M1 1 H16 M1 1 V6 M16 1 V6" strokeDasharray="1 1" />
          <rect x="1.5" y="9.5" width="14" height="7" />
          <path d="M8.5 9 V3.5 M6 6 L8.5 3 L11 6" stroke="#d0d0d0" />
        </svg>
      </div>
    </div>
  );
}

function Splitter() {
  return (
    <div className="h-[7px] border-t border-[#2e2e2e] bg-[linear-gradient(90deg,#0c0c0c_20%,#3a3a3a_50%,#0c0c0c_80%)] flex justify-center">
      <svg viewBox="0 0 20 5" width="20" height="5" className="mt-[1px]">
        <path d="M0 5 L10 1 L20 5 Z" fill="#cfcfcf" />
      </svg>
    </div>
  );
}

export default function App() {
  return (
    <div className="w-[1436px] h-[785px] overflow-hidden bg-[#050505] flex flex-col font-['Noto_Sans','Noto_Sans_CJK_SC',sans-serif]">
      <TitleBar />
      <NavBar />
      <div className="flex-1 flex min-h-0">
        <SideBar />
        <div className="flex-1 min-w-0 flex flex-col">
          <ToolBar />
          <LegendRow />
          <PriceChart />
          <VolLegend />
          <VolChart />
          <DateAxis />
          <IndicatorRow />
          <Splitter />
          <BottomTabs />
        </div>
      </div>
    </div>
  );
}
